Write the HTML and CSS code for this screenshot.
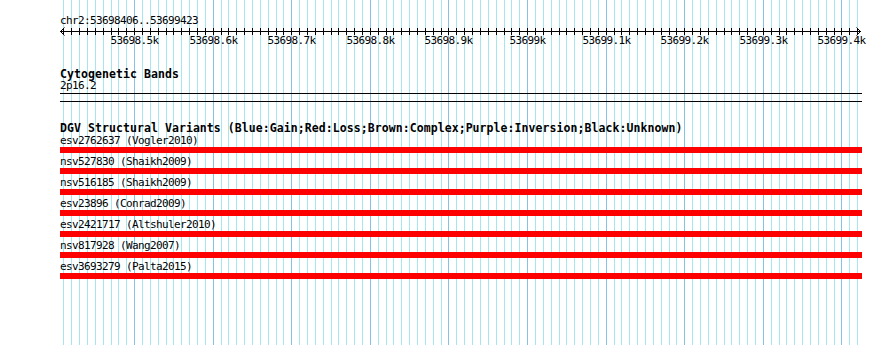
FILE: index.html
```html
<!DOCTYPE html>
<html lang="en">
<head>
    <meta charset="UTF-8">
    <title>chr2:53698406-53699423</title>
    <link rel="stylesheet" href="styles.css">
</head>
<body>
    <div class="browser">
        <!-- base position guidelines, drawn by the script below -->
        <svg class="guides" id="guides" width="890" height="345"></svg>

        <div class="tracks">
            <div class="position">chr2:53698406..53699423</div>
            <svg class="ruler" id="ruler" width="802" height="20"></svg>

            <div class="track-title cyto-title">Cytogenetic Bands</div>
            <div class="label">2p16.2</div>
            <div class="band"></div>

            <div class="track-title dgv-title">DGV Structural Variants (Blue:Gain;Red:Loss;Brown:Complex;Purple:Inversion;Black:Unknown)</div>
            <div class="features">
                <div class="feature"><div class="label">esv2762637 (Vogler2010)</div><div class="bar loss"></div></div>
                <div class="feature"><div class="label">nsv527830 (Shaikh2009)</div><div class="bar loss"></div></div>
                <div class="feature"><div class="label">nsv516185 (Shaikh2009)</div><div class="bar loss"></div></div>
                <div class="feature"><div class="label">esv23896 (Conrad2009)</div><div class="bar loss"></div></div>
                <div class="feature"><div class="label">esv2421717 (Altshuler2010)</div><div class="bar loss"></div></div>
                <div class="feature"><div class="label">nsv817928 (Wang2007)</div><div class="bar loss"></div></div>
                <div class="feature"><div class="label">esv3693279 (Palta2015)</div><div class="bar loss"></div></div>
            </div>
        </div>
    </div>

    <script>
        const NS = 'http://www.w3.org/2000/svg';
        const winStart = 53698406;
        const winEnd = 53699423;
        const left = 60;
        const scale = 800 / (winEnd - winStart + 1);

        function toX(pos) {
            return Math.floor(left + (pos - winStart + 1) * scale);
        }

        function add(parent, tag, attrs, text) {
            const el = document.createElementNS(NS, tag);
            for (const key in attrs) el.setAttribute(key, attrs[key]);
            if (text) el.textContent = text;
            parent.appendChild(el);
            return el;
        }

        const guides = document.getElementById('guides');
        const ruler = document.getElementById('ruler');

        // ruler baseline and arrow heads
        add(ruler, 'rect', { x: 0, y: 4, width: 801, height: 1, class: 'ink' });
        add(ruler, 'polyline', { points: '4.5,0.5 0.5,4.5 4.5,8.5', class: 'arrow' });
        add(ruler, 'polyline', { points: '796.5,0.5 800.5,4.5 796.5,8.5', class: 'arrow' });

        for (let p = Math.ceil(winStart / 10) * 10; p <= winEnd; p += 10) {
            const x = toX(p);
            const major = p % 100 === 0;
            add(guides, 'rect', { x: x, y: 0, width: 1, height: 345, class: major ? 'major' : 'minor' });
            add(ruler, 'rect', { x: x - left, y: 1, width: 1, height: 7, class: 'ink' });
            if (major) {
                const label = (p / 1000).toFixed(1).replace(/\.0$/, '') + 'k';
                add(ruler, 'text', { x: x - left + 0.5, y: 17, class: 'tick-label' }, label);
            }
        }
    </script>
</body>
</html>
```

FILE: styles.css
```css
body {
    margin: 0;
    background-color: white;
    font-family: "DejaVu Sans Mono", monospace;
    color: black;
}

.browser {
    position: relative;
    width: 890px;
    height: 345px;
    overflow: hidden;
}

.guides {
    position: absolute;
    left: 0;
    top: 0;
    shape-rendering: crispEdges;
}

.guides .minor {
    fill: #a6e6f0;
}

.guides .major {
    fill: #86c2e8;
}

.tracks {
    position: relative;
    width: 802px;
    padding: 15px 0 0 60px;
}

.position,
.label {
    height: 12px;
    font-size: 11px;
    line-height: 12px;
    letter-spacing: -0.62px;
    white-space: nowrap;
}

.ruler {
    display: block;
    overflow: visible;
    shape-rendering: crispEdges;
}

.ruler .ink {
    fill: black;
}

.ruler .arrow {
    fill: none;
    stroke: black;
    stroke-width: 1;
    shape-rendering: auto;
}

.tick-label {
    font-family: "DejaVu Sans Mono", monospace;
    font-size: 11px;
    letter-spacing: -0.62px;
    text-anchor: middle;
    fill: black;
}

.track-title {
    height: 12px;
    font-size: 11.5px;
    font-weight: bold;
    line-height: 12px;
    letter-spacing: 0.07px;
    white-space: nowrap;
}

.cyto-title {
    margin-top: 21px;
}

.band {
    height: 9px;
    margin-top: 1px;
    border-top: 1px solid black;
    border-bottom: 1px solid black;
    box-sizing: border-box;
}

.dgv-title {
    margin-top: 20px;
}

.features {
    display: flex;
    flex-direction: column;
    gap: 3px;
    margin-top: 1px;
}

.bar {
    height: 6px;
}

.loss {
    background-color: #ff0000;
}
```
